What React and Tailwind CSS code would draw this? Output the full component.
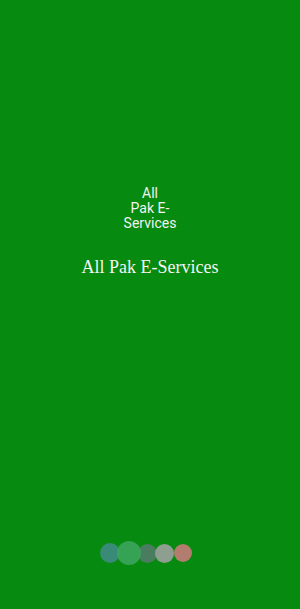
export default function App() {
  return (
    <div className="h-[609px] w-full bg-[#068a0f] flex flex-col items-center overflow-hidden">
      <div
        className="mt-[186px] text-center text-[14px] leading-[15px] text-[#f2f2f2]"
        style={{ fontFamily: "Roboto, sans-serif" }}
      >
        All
        <br />
        Pak E-
        <br />
        Services
      </div>

      <h1
        className="mt-[24px] text-[18px] leading-[24px] text-[#f5f5f5]"
        style={{ fontFamily: '"Liberation Serif", serif' }}
      >
        All Pak E-Services
      </h1>

      {/* loading dots */}
      <div className="mt-auto mb-[44px] flex items-center pr-[8px]">
        <span className="block w-[20px] h-[20px] rounded-full bg-[#3a8a78]" />
        <span className="block w-[24px] h-[24px] rounded-full bg-[#3ba55b]/90 -ml-[3px] z-10" />
        <span className="block w-[19px] h-[19px] rounded-full bg-[#4a7d60] -ml-[3px]" />
        <span className="block w-[19px] h-[19px] rounded-full bg-[#8e9e90] -ml-[2px]" />
        <span className="block w-[18px] h-[18px] rounded-full bg-[#b27d6e]" />
      </div>
    </div>
  );
}
